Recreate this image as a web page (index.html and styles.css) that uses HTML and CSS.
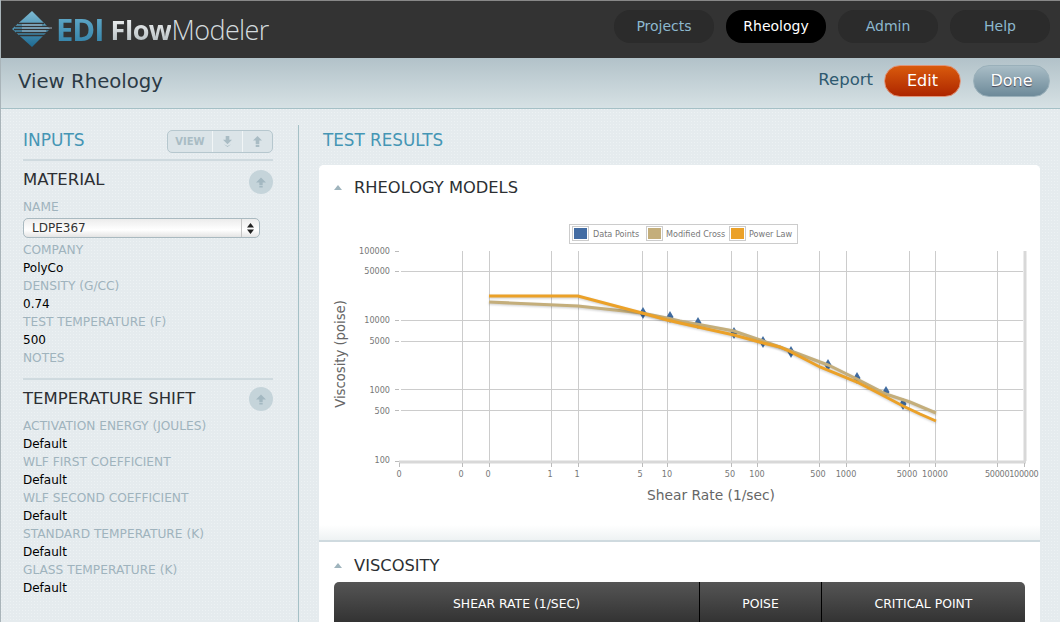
FILE: index.html
```html
<!DOCTYPE html>
<html lang="en">
  <head>
    <meta charset="UTF-8" />
    <title>View Rheology</title>
    <link rel="stylesheet" href="styles.css">
  </head>
  <body>
    <!-- Top bar -->
    <header class="topbar">
      <div class="logo">
        <svg class="logo-mark" width="42" height="37" viewBox="0 0 42 37">
          <defs>
            <linearGradient id="markFill" x1="0" y1="0" x2="0" y2="1">
              <stop offset="0" stop-color="#7dbbd4" />
              <stop offset="1" stop-color="#1d6a92" />
            </linearGradient>
          </defs>
          <path d="M20 0 L38 18 L20 36 L0 18 Z" fill="url(#markFill)" />
          <path d="M6 12.5 H32 M3 15.5 H37 M2 18.5 H41 M4 21.5 H37 M7 24.5 H33" stroke="#333" stroke-width="1.3" fill="none" />
          <path d="M10 14 H30 M10 17 H40 M10 20 H34" stroke="#bcd" stroke-width="0.8" fill="none" />
        </svg>
        <span class="logo-edi">EDI</span>
        <span class="logo-flow">Flow</span><span class="logo-modeler">Modeler</span>
      </div>
      <nav class="nav">
        <a class="nav-item">Projects</a>
        <a class="nav-item active">Rheology</a>
        <a class="nav-item">Admin</a>
        <a class="nav-item">Help</a>
      </nav>
    </header>

    <!-- Page title -->
    <div class="subbar">
      <h1>View Rheology</h1>
      <div class="actions">
        <a class="report">Report</a>
        <a class="btn btn-edit">Edit</a>
        <a class="btn btn-done">Done</a>
      </div>
    </div>

    <div class="content">
      <!-- Inputs -->
      <aside class="inputs">
        <div class="inputs-head">
          <h2>INPUTS</h2>
          <div class="btn-group">
            <span class="group-view">VIEW</span>
            <span class="group-icon">
              <svg width="9" height="11" viewBox="0 0 10 12"><path d="M3 0 H7 V4 H10 L5 9 L0 4 H3 Z M1 9 L5 12 L9 9 L5 11 Z" fill="#a9bcc4" /></svg>
            </span>
            <span class="group-icon">
              <svg width="9" height="11" viewBox="0 0 10 12"><path d="M5 0 L10 5 H7 V9 H3 V5 H0 Z M3 10 H7 V12 H3 Z" fill="#a9bcc4" /></svg>
            </span>
          </div>
        </div>

        <section class="group">
          <div class="group-head">
            <h3>MATERIAL</h3>
            <span class="round-btn">
              <svg width="10" height="11" viewBox="0 0 12 12"><path d="M6 0 L12 6 H8 V9 H4 V6 H0 Z M4 10 H8 V12 H4 Z" fill="#a3b8c1" /></svg>
            </span>
          </div>
          <div class="label">NAME</div>
          <div class="select">
            <span class="select-text">LDPE367</span>
            <span class="select-arrows">
              <svg width="7" height="11" viewBox="0 0 7 11"><path d="M3.5 0 L7 4.5 H0 Z M3.5 11 L0 6.5 H7 Z" fill="#222" /></svg>
            </span>
          </div>
          <div class="label">COMPANY</div>
          <div class="value">PolyCo</div>
          <div class="label">DENSITY (G/CC)</div>
          <div class="value">0.74</div>
          <div class="label">TEST TEMPERATURE (F)</div>
          <div class="value">500</div>
          <div class="label">NOTES</div>
        </section>

        <section class="group group-shift">
          <div class="group-head">
            <h3>TEMPERATURE SHIFT</h3>
            <span class="round-btn">
              <svg width="10" height="11" viewBox="0 0 12 12"><path d="M6 0 L12 6 H8 V9 H4 V6 H0 Z M4 10 H8 V12 H4 Z" fill="#a3b8c1" /></svg>
            </span>
          </div>
          <div class="label">ACTIVATION ENERGY (JOULES)</div>
          <div class="value">Default</div>
          <div class="label">WLF FIRST COEFFICIENT</div>
          <div class="value">Default</div>
          <div class="label">WLF SECOND COEFFICIENT</div>
          <div class="value">Default</div>
          <div class="label">STANDARD TEMPERATURE (K)</div>
          <div class="value">Default</div>
          <div class="label">GLASS TEMPERATURE (K)</div>
          <div class="value">Default</div>
        </section>
      </aside>

      <!-- Results -->
      <main class="results">
        <h2>TEST RESULTS</h2>
        <div class="card">
          <section class="panel panel-chart">
            <div class="panel-head">
              <span class="caret"></span>
              <h3>RHEOLOGY MODELS</h3>
            </div>
            <svg class="chart" width="721" height="320" viewBox="319 210 721 320">
              <defs>
                <path id="pt" d="M0 -6 L3.5 0 L0 6 L-3.5 0 Z" fill="#3f6a9f" />
              </defs>

              <!-- legend -->
              <rect x="569.5" y="224.5" width="228" height="19" fill="#fff" stroke="#ccc" />
              <rect x="573.5" y="227.5" width="14" height="12" fill="#436ca3" stroke="#fff" />
              <rect x="572.5" y="226.5" width="16" height="14" fill="none" stroke="#ccc" />
              <text class="legend-text" x="593" y="237">Data Points</text>
              <rect x="647.5" y="227.5" width="14" height="12" fill="#c4ae7b" stroke="#fff" />
              <rect x="646.5" y="226.5" width="16" height="14" fill="none" stroke="#ccc" />
              <text class="legend-text" x="666" y="237">Modified Cross</text>
              <rect x="730.5" y="227.5" width="14" height="12" fill="#eba128" stroke="#fff" />
              <rect x="729.5" y="226.5" width="16" height="14" fill="none" stroke="#ccc" />
              <text class="legend-text" x="749" y="237">Power Law</text>

              <!-- grid -->
              <path class="grid" d="M401 271.5 H1023 M401 320.5 H1023 M401 341.5 H1023 M401 389.5 H1023 M401 410.5 H1023" />
              <path class="grid" d="M462.5 251 V461 M489.5 251 V461 M551.5 251 V461 M578.5 251 V461 M642.5 251 V461 M667.5 251 V461 M731.5 251 V461 M757.5 251 V461 M819.5 251 V461 M846.5 251 V461 M909.5 251 V461 M935.5 251 V461 M997.5 251 V461" />
              <path class="frame" d="M1025 251 V461 M399 462 H1026" />
              <path class="tick" d="M395 251.5 H399 M395 271.5 H399 M395 320.5 H399 M395 341.5 H399 M395 389.5 H399 M395 410.5 H399 M395 461.5 H399" />
              <path class="tick" d="M399.5 463 V467 M462.5 463 V467 M489.5 463 V467 M551.5 463 V467 M578.5 463 V467 M642.5 463 V467 M667.5 463 V467 M731.5 463 V467 M757.5 463 V467 M819.5 463 V467 M846.5 463 V467 M909.5 463 V467 M935.5 463 V467 M997.5 463 V467 M1024.5 463 V467" />

              <!-- y labels -->
              <g class="axis-y">
                <text x="390" y="254">100000</text>
                <text x="390" y="274">50000</text>
                <text x="390" y="323">10000</text>
                <text x="390" y="344">5000</text>
                <text x="390" y="393">1000</text>
                <text x="390" y="414">500</text>
                <text x="390" y="463">100</text>
              </g>

              <!-- x labels -->
              <g class="axis-x">
                <text x="399" y="477">0</text>
                <text x="461" y="477">0</text>
                <text x="488" y="477">0</text>
                <text x="550" y="477">1</text>
                <text x="577" y="477">1</text>
                <text x="640" y="477">5</text>
                <text x="667" y="477">10</text>
                <text x="730" y="477">50</text>
                <text x="757" y="477">100</text>
                <text x="818" y="477">500</text>
                <text x="846" y="477">1000</text>
                <text x="907" y="477">5000</text>
                <text x="935" y="477">10000</text>
                <text x="985" y="477" class="tight">50000100000</text>
              </g>

              <text class="axis-title" x="711" y="500" text-anchor="middle">Shear Rate (1/sec)</text>
              <text class="axis-title axis-title-y" transform="translate(345 354) rotate(-90)" text-anchor="middle">Viscosity (poise)</text>

              <!-- series -->
              <use href="#pt" x="643" y="313" />
              <use href="#pt" x="670" y="317" />
              <use href="#pt" x="698" y="323" />
              <use href="#pt" x="734" y="333" />
              <use href="#pt" x="763" y="342" />
              <use href="#pt" x="791" y="352" />
              <use href="#pt" x="828" y="365" />
              <use href="#pt" x="857" y="378" />
              <use href="#pt" x="886" y="392" />
              <use href="#pt" x="903" y="404" />
              <polyline class="line line-tan" points="489,302 578,306 642,313 667,318 680,321 734,331 763,341 791,351 828,365 857,379 886,394 910,402 936,413" />
              <polyline class="line line-orange" points="489,296 578,296 642,313 667,320 680,323 734,335 763,343 780,347 791,352 820,367 857,382 886,397 903,406 920,414 936,421" />
            </svg>
          </section>

          <section class="panel panel-table">
            <div class="panel-head">
              <span class="caret"></span>
              <h3>VISCOSITY</h3>
            </div>
            <div class="table-head">
              <div class="col col-rate">SHEAR RATE (1/SEC)</div>
              <div class="col col-poise">POISE</div>
              <div class="col col-crit">CRITICAL POINT</div>
            </div>
          </section>
        </div>
      </main>
    </div>
  </body>
</html>
```

FILE: styles.css
```css
html,
body {
  margin: 0;
  height: 622px;
  overflow: hidden;
}
body {
  font-family: "DejaVu Sans", sans-serif;
  background-color: #e5ebee;
  background-image: radial-gradient(#edf2f4 1px, transparent 1px);
  background-size: 3px 3px;
  border-left: 1px solid #a9b4b9;
  box-sizing: border-box;
  width: 1060px;
  display: flex;
  flex-direction: column;
}
h1,
h2,
h3 {
  margin: 0;
  font-weight: normal;
}

/* top bar */
.topbar {
  height: 58px;
  flex: none;
  box-sizing: border-box;
  background: #333;
  border-top: 1px solid #888;
  display: flex;
  align-items: flex-start;
  justify-content: space-between;
  padding-right: 10px;
}
.logo {
  display: flex;
  align-items: center;
  height: 56px;
  padding-left: 11px;
  font-family: "Open Sans", sans-serif;
  font-size: 27px;
}
.logo-mark {
  margin-right: 2px;
}
.logo-edi {
  font-weight: 700;
  font-size: 31px;
  letter-spacing: -1px;
  margin-right: 7px;
  background: linear-gradient(#6db2cf, #2a7ba3);
  -webkit-background-clip: text;
  color: transparent;
}
.logo-flow {
  font-weight: 700;
  letter-spacing: -0.5px;
  background: linear-gradient(#fff, #aab4b8);
  -webkit-background-clip: text;
  color: transparent;
}
.logo-modeler {
  font-weight: 300;
  letter-spacing: -0.6px;
  color: #d4dbde;
}
.nav {
  display: flex;
  gap: 12px;
  margin-top: 9px;
}
.nav-item {
  width: 100px;
  height: 33px;
  line-height: 32px;
  text-align: center;
  border-radius: 16px;
  background: #2b2b2b;
  color: #8db8cf;
  font-size: 14px;
}
.nav-item.active {
  background: #000;
  color: #fff;
}

/* page title */
.subbar {
  height: 51px;
  flex: none;
  box-sizing: border-box;
  background: linear-gradient(#b2c2c9, #d6e1e4);
  border-bottom: 1px solid #a5c0c6;
  display: flex;
  align-items: center;
  justify-content: space-between;
  padding: 0 10px 4px 17px;
}
.subbar h1 {
  font-size: 19.7px;
  color: #2c3a45;
}
.actions {
  display: flex;
  align-items: center;
}
.report {
  font-size: 16.5px;
  color: #2f5a70;
  margin-right: 11px;
  margin-top: -4px;
}
.btn {
  width: 77px;
  height: 32px;
  box-sizing: border-box;
  line-height: 29px;
  text-align: center;
  border-radius: 16px;
  font-size: 16px;
  color: #fff;
}
.btn-edit {
  background: linear-gradient(#d95a0c, #ad2600);
  border: 1px solid #e0957a;
  margin-right: 12px;
}
.btn-done {
  background: linear-gradient(#a9bdc6, #6d8a99);
  border: 1px solid #9ab0ba;
  margin-top: -1px;
  text-shadow: 0 1px 1px #445;
}

/* layout */
.content {
  flex: 1;
  display: flex;
  min-height: 0;
  padding-top: 16px;
}
.inputs {
  width: 298px;
  flex: none;
  box-sizing: border-box;
  border-right: 1px solid #a5c0c6;
  padding: 0 25px 0 22px;
}
.results {
  flex: 1;
  padding: 0 20px;
  min-width: 0;
}

/* inputs */
.inputs-head {
  display: flex;
  justify-content: space-between;
  align-items: center;
  height: 36px;
  padding-bottom: 5px;
  border-bottom: 2px solid #cfdadf;
  box-sizing: border-box;
}
.inputs-head h2 {
  font-size: 17px;
  color: #4596b5;
}
.btn-group {
  display: flex;
  height: 23px;
  box-sizing: border-box;
  margin-top: 4px;
  border: 1px solid #b6c7ce;
  border-radius: 5px;
  background: #dbe4e8;
}
.group-view {
  width: 44px;
  text-align: center;
  line-height: 21px;
  font-size: 10px;
  font-weight: bold;
  color: #a9bcc4;
  border-right: 1px solid #f1f5f6;
}
.group-icon {
  width: 29px;
  display: flex;
  align-items: center;
  justify-content: center;
}
.group-icon + .group-icon {
  border-left: 1px solid #f1f5f6;
}
.group {
  font-size: 12.2px;
}
.group-head {
  display: flex;
  justify-content: space-between;
  align-items: center;
  height: 24px;
  margin-top: 9px;
  margin-bottom: 4px;
}
.group-head h3 {
  font-size: 16.5px;
  color: #2c2f33;
  margin-top: -6px;
}
.group-shift {
  border-top: 2px solid #cfdadf;
  margin-top: 11px;
}
.group-shift .group-head {
  margin-top: 7px;
  margin-bottom: 6px;
}
.group-shift .group-head h3 {
  margin-top: -2px;
}
.round-btn {
  width: 24px;
  height: 24px;
  border-radius: 50%;
  background: #c5d4da;
  display: flex;
  align-items: center;
  justify-content: center;
}
.label {
  height: 18px;
  line-height: 18px;
  color: #9fb3bd;
  white-space: nowrap;
}
.value {
  height: 18px;
  line-height: 18px;
  font-size: 12px;
  color: #000;
}
.select {
  width: 237px;
  height: 20px;
  box-sizing: border-box;
  margin: 2px 0 3px;
  border: 1px solid #a9b9c0;
  border-radius: 5px;
  background: linear-gradient(#ececec, #fff 60%, #e4e4e4);
  display: flex;
  justify-content: space-between;
  align-items: center;
  font-size: 12px;
  color: #333;
}
.select-text {
  padding-left: 8px;
}
.select-arrows {
  width: 17px;
  height: 18px;
  border-left: 1px solid #c5c5c5;
  display: flex;
  align-items: center;
  justify-content: center;
}

/* results */
.results h2 {
  height: 40px;
  line-height: 30px;
  margin-left: 4px;
  font-size: 16.8px;
  color: #4596b5;
}
.card {
  background: #fff;
  border-radius: 5px 5px 0 0;
  height: 470px;
  overflow: hidden;
}
.panel-chart {
  height: 377px;
  box-sizing: border-box;
  border-bottom: 2px solid #cfdadf;
  background: linear-gradient(#fff 360px, #eef2f3);
  position: relative;
}
.panel-head {
  display: flex;
  align-items: center;
  padding: 0 0 1px 15px;
  height: 46px;
  box-sizing: border-box;
}
.panel-head h3 {
  font-size: 16.3px;
  color: #2c2f33;
}
.caret {
  width: 0;
  height: 0;
  border: 4px solid transparent;
  border-top: 0;
  border-bottom: 5px solid #9fb4bd;
  margin-right: 12px;
}
.chart {
  position: absolute;
  left: 0;
  top: 45px;
}
.legend-text {
  font-family: "DejaVu Sans Condensed", "DejaVu Sans", sans-serif;
  font-size: 9px;
  fill: #777;
}
.grid {
  stroke: #ccc;
  fill: none;
}
.frame {
  stroke: #d8d8d8;
  stroke-width: 3;
  fill: none;
}
.tick {
  stroke: #bbb;
  fill: none;
}
.axis-y text {
  font-family: "DejaVu Sans Condensed", "DejaVu Sans", sans-serif;
  font-size: 9px;
  fill: #777;
  text-anchor: end;
}
.axis-x text {
  font-family: "DejaVu Sans Condensed", "DejaVu Sans", sans-serif;
  font-size: 9px;
  fill: #777;
  text-anchor: middle;
}
.axis-x .tight {
  text-anchor: start;
  letter-spacing: -0.3px;
}
.axis-title {
  font-size: 13.8px;
  fill: #666;
}
.axis-title-y {
  font-size: 13.2px;
}
.line {
  fill: none;
  stroke-width: 3;
  filter: drop-shadow(0 1px 1px rgba(0, 0, 0, 0.2));
}
.line-tan {
  stroke: #c4ae7b;
}
.line-orange {
  stroke: #eba128;
}
.panel-table {
  padding: 0 15px;
}
.panel-table .panel-head {
  padding: 0;
  margin-top: 6px;
  height: 34px;
}
.table-head {
  display: flex;
  height: 40px;
  border-radius: 5px 5px 0 0;
  background: linear-gradient(#555, #333);
  color: #fff;
  font-size: 12.4px;
  line-height: 43px;
  text-align: center;
}
.col-rate {
  width: 365px;
  border-right: 1px solid #000;
}
.col-poise {
  width: 121px;
  border-right: 1px solid #000;
}
.col-crit {
  flex: 1;
}
```
